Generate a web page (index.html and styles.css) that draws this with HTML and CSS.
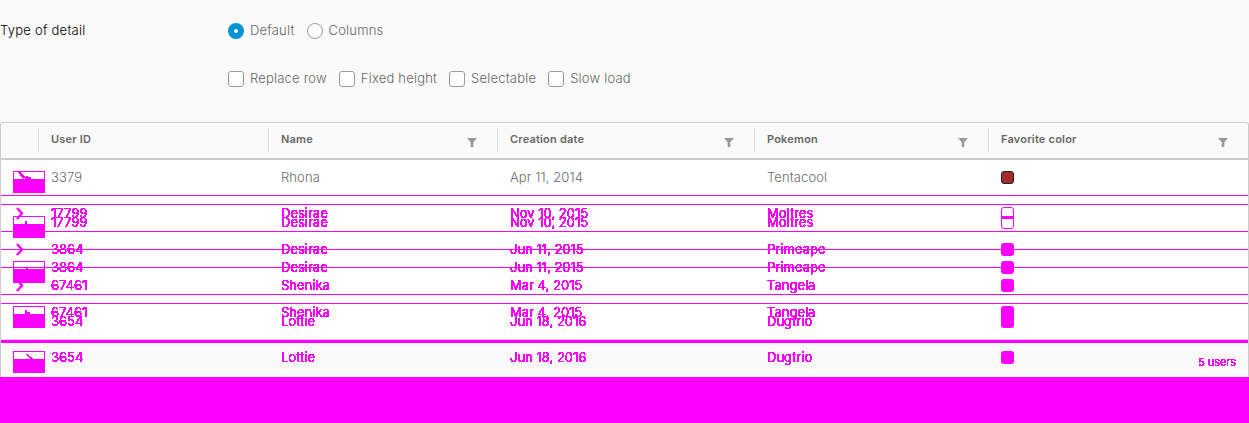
FILE: index.html
```html
<!DOCTYPE html>
<html lang="en">
<head>
<meta charset="utf-8">
<title>Datagrid detail</title>
<link rel="stylesheet" href="styles.css">
</head>
<body>
<svg class="defs" width="0" height="0" aria-hidden="true">
  <filter id="hard" x="0" y="0" width="100%" height="100%" color-interpolation-filters="sRGB">
    <feComponentTransfer><feFuncA type="discrete" tableValues="0 1 1 1 1 1 1 1"/></feComponentTransfer>
  </filter>
</svg>
<form class="options">
  <div class="option-row first">
    <span class="option-title">Type of detail</span>
    <div class="choices">
      <label class="choice"><span class="radio on"></span>Default</label>
      <label class="choice"><span class="radio"></span>Columns</label>
    </div>
  </div>
  <div class="option-row second">
    <span class="option-title"></span>
    <div class="choices">
      <label class="choice"><span class="check"></span>Replace row</label>
      <label class="choice"><span class="check"></span>Fixed height</label>
      <label class="choice"><span class="check"></span>Selectable</label>
      <label class="choice"><span class="check"></span>Slow load</label>
    </div>
  </div>
</form>
<section class="grid">
  <header class="row head">
    <div class="hcell"></div>
    <div class="hcell sep">User ID</div>
    <div class="hcell sep">Name<svg class="funnel" viewBox="0 0 10 10"><path d="M0 1h10L6.300 5.200V10H3.700V5.200z"/></svg></div>
    <div class="hcell sep">Creation date<svg class="funnel" viewBox="0 0 10 10"><path d="M0 1h10L6.300 5.200V10H3.700V5.200z"/></svg></div>
    <div class="hcell sep">Pokemon<svg class="funnel" viewBox="0 0 10 10"><path d="M0 1h10L6.300 5.200V10H3.700V5.200z"/></svg></div>
    <div class="hcell sep">Favorite color<svg class="funnel" viewBox="0 0 10 10"><path d="M0 1h10L6.300 5.200V10H3.700V5.200z"/></svg></div>
  </header>
  <div class="body">
    <div class="layer wide">
      <div class="row data">
        <div class="cell"><svg class="box" viewBox="0 0 32 22"><path class="box-o" d="M.5.5h31v8H.5z"/><path class="box-f" d="M0 8h32v14H0zM4 0h2l6 6-2 2zM13 5h2v1h3v2h-6z"/></svg></div>
        <div class="cell plain">3379</div><div class="cell plain">Rhona</div><div class="cell plain">Apr 11, 2014</div><div class="cell plain">Tentacool</div>
        <div class="cell"><span class="swatch brown"></span></div>
      </div>
      <div class="row data ghost">
        <div class="cell"><svg class="box" viewBox="0 0 32 22"><path class="box-o" d="M.5.5h31v8H.5z"/><path class="box-f" d="M0 8h32v14H0zM12 5h2v3h-2z"/></svg></div>
        <div class="cell"><span class="t">17799</span></div><div class="cell"><span class="t">Desirae</span></div><div class="cell"><span class="t">Nov 10, 2015</span></div><div class="cell"><span class="t">Moltres</span></div>
        <div class="cell"></div>
      </div>
      <div class="row data ghost">
        <div class="cell"><svg class="box" viewBox="0 0 32 22"><path class="box-o" d="M.5.5h31v8H.5z"/><path class="box-f" d="M0 8h32v14H0zM13 6h2v2h-2z"/></svg></div>
        <div class="cell"><span class="t">3864</span></div><div class="cell"><span class="t">Desirae</span></div><div class="cell"><span class="t">Jun 11, 2015</span></div><div class="cell"><span class="t">Primeape</span></div>
        <div class="cell"><span class="swatch"></span></div>
      </div>
      <div class="row data ghost">
        <div class="cell"><svg class="box" viewBox="0 0 32 22"><path class="box-o" d="M.5.5h31v8H.5z"/><path class="box-f" d="M0 8h32v14H0zM12 4h2v4h-2zM14 6h3v2h-3z"/></svg></div>
        <div class="cell"><span class="t">67461</span></div><div class="cell"><span class="t">Shenika</span></div><div class="cell"><span class="t">Mar 4, 2015</span></div><div class="cell"><span class="t">Tangela</span></div>
        <div class="cell"><span class="swatch tall"></span></div>
      </div>
      <div class="row data ghost foot">
        <div class="cell"><svg class="box" viewBox="0 0 32 22"><path class="box-o" d="M.5.5h31v8H.5z"/><path class="box-f" d="M0 8h32v14H0zM12 3h2l7 5h-3z"/></svg></div>
        <div class="cell"><span class="t">3654</span></div><div class="cell"><span class="t">Lottie</span></div><div class="cell"><span class="t">Jun 18, 2016</span></div><div class="cell"><span class="t">Dugtrio</span></div>
        <div class="cell last"><span class="swatch"></span><span class="t count">5 users</span></div>
      </div>
    </div>
    <div class="layer narrow">
      <div class="row data ghost"></div>
      <div class="row data ghost">
        <div class="cell"><svg class="chev" viewBox="0 0 7 11"><path d="M1 0l5 5.500-5 5.500"/></svg></div>
        <div class="cell"><span class="t">17799</span></div><div class="cell"><span class="t">Desirae</span></div><div class="cell"><span class="t">Nov 10, 2015</span></div><div class="cell"><span class="t">Moltres</span></div>
        <div class="cell"><span class="swatch split"></span></div>
      </div>
      <div class="row data ghost">
        <div class="cell"><svg class="chev" viewBox="0 0 7 11"><path d="M1 0l5 5.500-5 5.500"/></svg></div>
        <div class="cell"><span class="t">3864</span></div><div class="cell"><span class="t">Desirae</span></div><div class="cell"><span class="t">Jun 11, 2015</span></div><div class="cell"><span class="t">Primeape</span></div>
        <div class="cell"><span class="swatch"></span></div>
      </div>
      <div class="row data ghost">
        <div class="cell"><svg class="chev" viewBox="0 0 7 11"><path d="M1 0l5 5.500-5 5.500"/></svg></div>
        <div class="cell"><span class="t">67461</span></div><div class="cell"><span class="t">Shenika</span></div><div class="cell"><span class="t">Mar 4, 2015</span></div><div class="cell"><span class="t">Tangela</span></div>
        <div class="cell"><span class="swatch"></span></div>
      </div>
      <div class="row data ghost pale">
        <div class="cell"></div>
        <div class="cell"><span class="t">3654</span></div><div class="cell"><span class="t">Lottie</span></div><div class="cell"><span class="t">Jun 18, 2016</span></div><div class="cell"><span class="t">Dugtrio</span></div>
        <div class="cell"></div>
      </div>
    </div>
  </div>
</section>
<div class="mask"></div>
</body>
</html>
```
FILE: styles.css
```css
* { box-sizing: border-box; }
html, body { height: 100%; }
body {
  margin: 0;
  background: #fafafa;
  font-family: Inter, "Noto Sans", sans-serif;
  font-size: 13px;
  letter-spacing: .1px;
  color: #565656;
  display: flex;
  flex-direction: column;
  overflow: hidden;
}
.defs { position: absolute; }

.options { height: 122px; flex: none; }
.option-row { display: flex; align-items: flex-start; height: 16px; line-height: 14px; }
.option-row.first { margin-top: 23px; }
.option-row.second { margin-top: 32px; }
.option-title { width: 228px; color: #000; font-weight: 300; letter-spacing: .25px; }
.choices { display: flex; gap: 12px; }
.choice { display: flex; align-items: flex-start; gap: 6px; color: #666; font-weight: 300; letter-spacing: .2px; }
.radio, .check {
  width: 16px;
  height: 16px;
  border: 1px solid #9a9a9a;
  background: #fff;
  display: block;
}
.radio { border-radius: 50%; }
.check { border-radius: 3px; }
.radio.on { background: #0095d3; border: 5px solid #0095d3; }
.radio.on::after {
  content: "";
  display: block;
  width: 4px;
  height: 4px;
  margin: 1px;
  background: #fff;
  border-radius: 50%;
}

.grid {
  flex: none;
  height: 255px;
  border: 1px solid #ccc;
  border-bottom: 0;
  border-radius: 3px 3px 0 0;
  background: #fff;
  display: flex;
  flex-direction: column;
}
.row { display: grid; grid-template-columns: 37px 230px 229px 257px 234px 1fr; }
.head {
  height: 37px;
  flex: none;
  background: #fafafa;
  border-bottom: 2px solid #ccc;
  border-radius: 3px 3px 0 0;
  font-size: 11px;
  font-weight: 600;
  letter-spacing: .2px;
  color: #666;
}
.hcell { display: flex; align-items: center; justify-content: space-between; padding: 0 20px 2px 13px; margin-top: 5px; height: 24px; }
.hcell.sep { border-left: 1px solid #ddd; padding-left: 12px; }
.funnel { width: 10px; height: 10px; fill: #999; margin-top: 5px; }

.body { display: grid; flex: 1; }
.layer { grid-area: 1 / 1; min-width: 0; }
.data { border-bottom: 1px solid #f0f; }
.wide .data { height: 45px; background: #fff; }
.wide .data.foot { height: 37px; background: #fafafa; border-bottom: 0; border-top: 3px solid #f0f; }
.narrow .data { height: 36px; }
.narrow .data.pale { border-bottom-color: #f9c8f9; }
.cell { padding: 9px 0 0 13px; line-height: 16px; min-width: 0; }
.plain { color: #6a6a6a; font-weight: 300; }
.foot .cell { padding-top: 6px; }
.cell:first-child { padding: 11px 0 0 12px; }
.foot .cell:first-child { padding-top: 8px; }
.narrow .cell:first-child { padding: 12px 0 0 15px; }
.cell:last-child { padding-top: 11px; }
.foot .cell:last-child { padding-top: 8px; }
.last { display: flex; justify-content: space-between; padding-right: 12px; }
.t { display: block; color: #f0f; filter: url(#hard); letter-spacing: 0; }
.count { font-size: 11px; padding-top: 3px; letter-spacing: -.1px; }
.box { display: block; width: 32px; height: 22px; shape-rendering: crispEdges; }
.box-o { fill: #fff; stroke: #f0f; }
.box-f { fill: #f0f; }
.chev { display: block; width: 7px; height: 11px; fill: none; stroke: #f0f; stroke-width: 2.400; overflow: visible; }
.swatch { display: block; width: 13px; height: 13px; border-radius: 3px; background: #f0f; }
.swatch.brown { background: #a52a2a; border: 1px solid #222; }
.swatch.tall { height: 22px; }
.swatch.split {
  height: 22px;
  background: linear-gradient(#fff 8px, #f0f 8px, #f0f 11px, #fff 11px);
  border: 1px solid #f0f;
}
.mask { flex: 1; background: #f0f; }
```
